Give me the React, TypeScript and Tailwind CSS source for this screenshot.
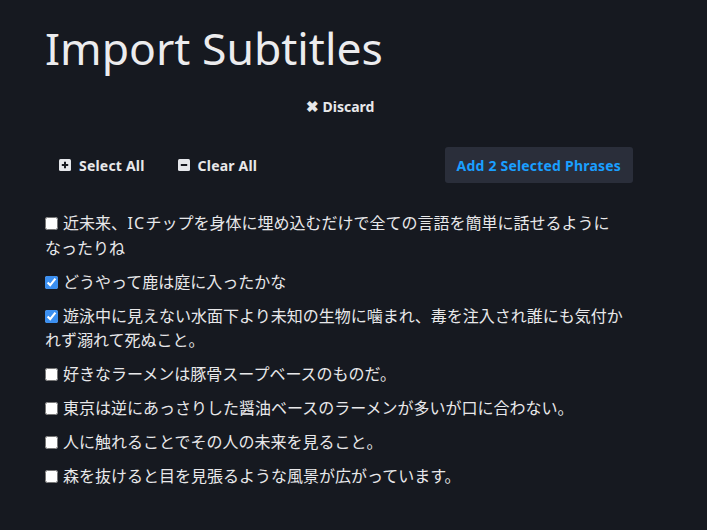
import React, { useState } from 'react';

const PHRASES = [
  { text: '近未来、ICチップを身体に埋め込むだけで全ての言語を簡単に話せるようになったりね', checked: false },
  { text: 'どうやって鹿は庭に入ったかな', checked: true },
  { text: '遊泳中に見えない水面下より未知の生物に噛まれ、毒を注入され誰にも気付かれず溺れて死ぬこと。', checked: true },
  { text: '好きなラーメンは豚骨スープベースのものだ。', checked: false },
  { text: '東京は逆にあっさりした醤油ベースのラーメンが多いが口に合わない。', checked: false },
  { text: '人に触れることでその人の未来を見ること。', checked: false },
  { text: '森を抜けると目を見張るような風景が広がっています。', checked: false },
];

const font = { fontFamily: '"Noto Sans", "Noto Sans CJK JP", sans-serif' };
const cjk = { fontFamily: '"Noto Sans CJK JP", "Noto Sans", sans-serif' };

// latin runs inside the japanese lines are set a little looser
const Phrase = ({ text }: { text: string }) => (
  <>
    {text.split(/([A-Za-z]+)/).map((part, i) =>
      /^[A-Za-z]+$/.test(part) ? (
        <span key={i} className="tracking-[1px] mx-[0.5px]" style={font}>
          {part}
        </span>
      ) : (
        part
      )
    )}
  </>
);

const PlusBox = () => (
  <svg width="12" height="12" viewBox="0 0 12 12">
    <rect width="12" height="12" rx="1.5" fill="#e5e7eb" />
    <path d="M6 2.8v6.4M2.8 6h6.4" stroke="#161920" strokeWidth="2" />
  </svg>
);

const MinusBox = () => (
  <svg width="12" height="12" viewBox="0 0 12 12">
    <rect width="12" height="12" rx="1.5" fill="#e5e7eb" />
    <path d="M2.8 6h6.4" stroke="#161920" strokeWidth="2" />
  </svg>
);

export default function App() {
  const [items, setItems] = useState(PHRASES);
  const count = items.filter((i) => i.checked).length;

  return (
    <div className="min-h-[530px] w-full bg-[#161920] text-[#e8e8ea] pl-[45px] pt-[20px]" style={font}>
      <div className="w-[588px]">
        <h1 className="text-[44.5px] leading-[56px] font-normal text-[#ececee]">Import Subtitles</h1>

        <div className="flex justify-center mt-[20px] pl-[2px]">
          <button className="flex items-center gap-[4px] text-[14px] font-bold text-[#e8e8ea]">
            <span className="text-[15px] leading-none">✖</span>
            Discard
          </button>
        </div>

        <div className="flex items-center justify-between mt-[30px]">
          <div className="flex items-center gap-[33px] pl-[14px] tracking-[0.2px]">
            <button className="flex items-center gap-[8px] text-[14px] font-bold">
              <PlusBox />
              Select All
            </button>
            <button className="flex items-center gap-[8px] text-[14px] font-bold">
              <MinusBox />
              Clear All
            </button>
          </div>
          <button className="h-[36px] px-[12px] rounded-[3px] bg-[#2a2e3a] text-[14px] font-bold text-[#1a9fff] tracking-[0.2px]">
            Add {count} Selected Phrases
          </button>
        </div>
      </div>

      <ul className="mt-[27px] w-[578px] flex flex-col gap-[10px] text-[16px] leading-[24px]" style={cjk}>
        {items.map((item, idx) => (
          <li key={idx}>
            <label className="cursor-pointer">
              <input
                type="checkbox"
                checked={item.checked}
                onChange={() =>
                  setItems(items.map((it, i) => (i === idx ? { ...it, checked: !it.checked } : it)))
                }
                className="w-[13px] h-[13px] mr-[5px] align-[-1px] accent-[#3b8ff0]"
              />
              <Phrase text={item.text} />
            </label>
          </li>
        ))}
      </ul>
    </div>
  );
}
